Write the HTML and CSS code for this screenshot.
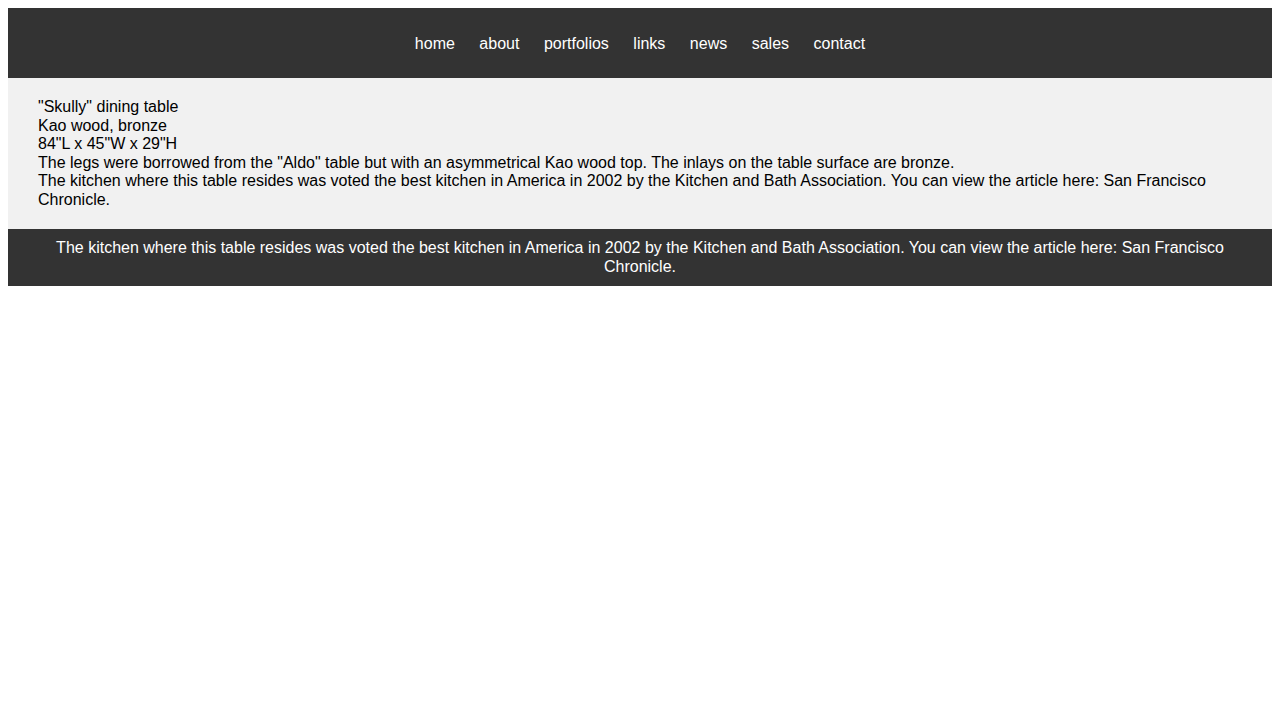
FILE: index.html
```html
<!DOCTYPE html>
<html>
<head>
<meta charset="utf-8">
<title>Skully dining table</title>
<link rel="stylesheet" href="styles.css">
</head>
<body>
<header class="site-header">
  <nav class="nav">
    <a href="#">home</a>
    <a href="#">about</a>
    <a href="#">portfolios</a>
    <a href="#">links</a>
    <a href="#">news</a>
    <a href="#">sales</a>
    <a href="#">contact</a>
  </nav>
</header>
<main class="content">
  <div>"Skully" dining table</div>
  <div>Kao wood, bronze</div>
  <div>84"L x 45"W x 29"H</div>
  <div>The legs were borrowed from the "Aldo" table but with an asymmetrical Kao wood top. The inlays on the table surface are bronze.</div>
  <div>The kitchen where this table resides was voted the best kitchen in America in 2002 by the Kitchen and Bath Association. You can view the article here: San Francisco Chronicle.</div>
</main>
<footer class="site-footer">
  The kitchen where this table resides was voted the best kitchen in America in 2002 by the Kitchen and Bath Association. You can view the article here: San Francisco Chronicle.
</footer>
</body>
</html>
```
FILE: styles.css
```css
body {
  margin: 8px;
  font-family: "Liberation Sans", Arial, sans-serif;
  font-size: 16px;
  line-height: 18.5px;
  color: #000;
  background: #fff;
}
.site-header {
  background: #333;
  height: 70px;
  padding-top: 2px;
  box-sizing: border-box;
  display: flex;
  align-items: center;
  justify-content: center;
}
.nav {
  display: flex;
  gap: 24.5px;
}
.nav a {
  color: #fff;
  text-decoration: none;
}
.content {
  background: #f1f1f1;
  padding: 20px 30px;
}
.site-footer {
  background: #333;
  color: #fff;
  text-align: center;
  padding: 10px 30px;
}
```
